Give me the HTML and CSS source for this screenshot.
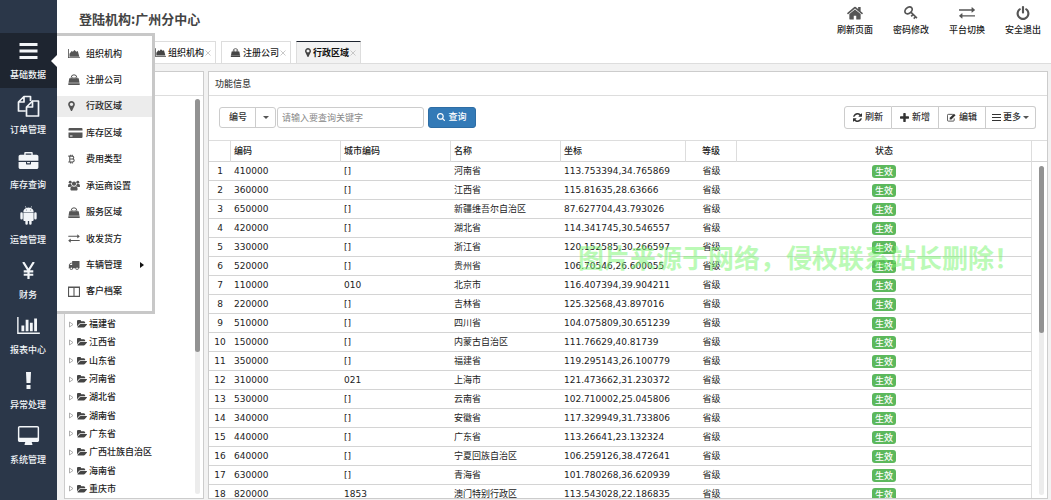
FILE: index.html
```html
<!DOCTYPE html>
<html lang="zh-CN">
<head>
<meta charset="utf-8">
<title>行政区域</title>
<link rel="stylesheet" href="styles.css">
</head>
<body>
<svg class="sprite" aria-hidden="true">
  <symbol id="bars" viewBox="0 0 18 16"><path d="M0 0h18v3H0zM0 6.500h18v3H0zM0 13h18v3H0z"/></symbol>
  <symbol id="lines" viewBox="0 0 18 16"><path d="M0 1h18v2H0zM0 7h18v2H0zM0 13h18v2H0z"/></symbol>
  <symbol id="files" viewBox="0 0 22 22"><path d="M8 16H1V7l5.500-5.500H13V6M6.500 1.500V7H1M15 6h6v15H9V12l6-6v6H9" fill="none" stroke="currentColor" stroke-width="1.700" stroke-linejoin="round"/></symbol>
  <symbol id="case" viewBox="0 0 1792 1536"><path d="M640 256h512v-128h-512v128zm1152 640v480q0 66-47 113t-113 47h-1472q-66 0-113-47t-47-113v-480h672v160q0 26 19 45t45 19h320q26 0 45-19t19-45v-160h672zm-768 0v128h-256v-128h256zm768-480v384h-1792v-384q0-66 47-113t113-47h352v-160q0-40 28-68t68-28h576q40 0 68 28t28 68v160h352q66 0 113 47t47 113z"/></symbol>
  <symbol id="android" viewBox="0 0 18 20"><path d="M3.600 6.300C3.600 4.300 4.800 3 6.400 2.200L5.300.4l.4-.3 1.200 1.900a6 6 0 0 1 4.200 0L12.300.1l.4.3-1.100 1.800c1.600.8 2.800 2.100 2.800 4.100zM6.700 3.700a.5.5 0 1 0 0 1 .5.5 0 0 0 0-1zm4.600 0a.5.5 0 1 0 0 1 .5.5 0 0 0 0-1zM3.600 6.900h10.800v7.600c0 .8-.5 1.300-1.300 1.300h-.8v2.700a1.300 1.300 0 0 1-2.600 0v-2.700H8.300v2.700a1.300 1.300 0 0 1-2.600 0v-2.700h-.8c-.8 0-1.300-.5-1.300-1.300zM.4 8a1.300 1.300 0 0 1 2.600 0v4.800a1.300 1.300 0 0 1-2.600 0zM15 8a1.300 1.300 0 0 1 2.600 0v4.800a1.300 1.300 0 0 1-2.600 0z" fill-rule="evenodd"/></symbol>
  <symbol id="yen" viewBox="0 0 12 16"><path d="M1 0l5 8 5-8M6 7.500V16M1.500 8.800h9M1.500 12h9" fill="none" stroke="currentColor" stroke-width="2.100"/></symbol>
  <symbol id="chart" viewBox="0 128 2048 1536"><path d="M640 896v512h-256v-512h256zm384-512v1024h-256v-1024h256zm1024 1152v128h-2048v-1536h128v1408h1920zm-640-896v768h-256v-768h256zm384-384v1152h-256v-1152h256z"/></symbol>
  <symbol id="exclaim" viewBox="0 0 6 17"><path d="M.5 0h5L5 11H1zM1 13h4v4H1z"/></symbol>
  <symbol id="desktop" viewBox="0 0 1856 1664"><path d="M1728 992v-832q0-13-9.500-22.500t-22.500-9.500h-1536q-13 0-22.500 9.500t-9.500 22.500v832q0 13 9.500 22.500t22.500 9.500h1536q13 0 22.500-9.500t9.500-22.500zm128-832v1088q0 66-47 113t-113 47h-480q0 37 16 77.500t32 71 16 43.500q0 26-19 45t-45 19h-576q-26 0-45-19t-19-45q0-14 16-44t32-70 16-78h-480q-66 0-113-47t-47-113v-1088q0-66 47-113t113-47h1536q66 0 113 47t47 113z"/></symbol>
  <symbol id="home" viewBox="80 224 1632 1312"><path d="M1472 992v480q0 26-19 45t-45 19h-384v-384h-256v384h-384q-26 0-45-19t-19-45v-480q0-1 .5-3t.5-3l575-474 575 474q1 2 1 6zm223-69l-62 74q-8 9-21 11h-3q-13 0-21-7l-692-577-692 577q-12 8-24 7-13-2-21-11l-62-74q-8-10-7-23.500t11-21.500l719-599q32-26 76-26t76 26l244 204v-195q0-14 9-23t23-9h192q14 0 23 9t9 23v408l219 182q10 8 11 21.500t-7 23.500z"/></symbol>
  <symbol id="key" viewBox="0 0 16 16"><g fill="none" stroke="currentColor"><ellipse cx="5.200" cy="5" rx="3.300" ry="4.600" transform="rotate(50 5.200 5)" stroke-width="2"/><path d="M7.800 7l7 6.800M10.200 9.800l-2 2M13 12.500l-1.900 1.900" stroke-width="1.800"/></g></symbol>
  <symbol id="exchange" viewBox="0 256 1792 1408"><path d="M1792 1232v96q0 13-9.500 22.500t-22.500 9.500h-1376v192q0 13-9.500 22.500t-22.500 9.500q-12 0-24-10l-319-270q-9-9-9-22 0-14 9-23l320-270q9-9 23-9 13 0 22.500 9.500t9.500 22.500v192h1376q13 0 22.500 9.500t9.500 22.500zm0-608q0 14-9 23l-320 270q-9 9-23 9-13 0-22.500-9.500t-9.500-22.500v-192h-1376q-13 0-22.500-9.500t-9.500-22.500v-96q0-13 9.500-22.500t22.500-9.500h1376v-192q0-14 9-23t23-9q12 0 24 10l319 270q9 9 9 23z"/></symbol>
  <symbol id="power" viewBox="128 0 1536 1664"><path d="M1664 896q0 156-61 298t-164 245-245 164-298 61-298-61-245-164-164-245-61-298q0-182 80.500-343t226.500-270q43-32 95.500-25t83.500 50q32 42 24.500 94.500t-49.500 84.500q-98 74-151.500 181t-53.500 228q0 104 40.500 198.500t109.500 163.500 163.500 109.500 198.500 40.500 198.500-40.500 163.500-109.500 109.500-163.500 40.500-198.500q0-121-53.500-228t-151.500-181q-42-32-49.500-84.500t24.500-94.500q31-43 84-50t95 25q146 109 226.500 270t80.500 343zm-640-768v640q0 52-38 90t-90 38-90-38-38-90v-640q0-52 38-90t90-38 90 38 38 90z"/></symbol>
  <symbol id="area" viewBox="0 0 13 10"><path d="M0 0h.9v9.100H13v.9H0zM1.600 8.400V5.200L4 2.200l1.300 1L7 1.200l2 1.800 1.600-.6L12.300 8.400z"/></symbol>
  <symbol id="bag" viewBox="0 0 12 11"><path d="M3.200 5V3.600a2.800 2.800 0 0 1 5.600 0V5M4.900 4.500V3M7.100 4.500V3" fill="none" stroke="currentColor"/><path d="M1.300 4.300h9.400l.8 4.500H.5zM.3 9.300h11.400V11H.3z"/></symbol>
  <symbol id="marker" viewBox="384 128 1024 1536"><path d="M1152 640q0-106-75-181t-181-75-181 75-75 181 75 181 181 75 181-75 75-181zm256 0q0 109-33 179l-364 774q-16 33-47.500 52t-67.500 19-67.500-19-46.500-52l-365-774q-33-70-33-179 0-212 150-362t362-150 362 150 150 362z"/></symbol>
  <symbol id="card" viewBox="0 0 14 10"><path d="M1 0h12a1 1 0 0 1 1 1v1.500H0V1a1 1 0 0 1 1-1zM0 4.500h14V9a1 1 0 0 1-1 1H1a1 1 0 0 1-1-1zm1.500 3v1H4v-1z" fill-rule="evenodd"/></symbol>
  <symbol id="coin" viewBox="0 0 8 10"><path d="M.3 1.700H4.600c2.600 0 2.600 3 .2 3.200 3.100 0 3 3.500 0 3.500H.3M2 1.700v6.700M2 4.900h3M3 0v1.700M4.900 0v1.700M3 8.400V10M4.900 8.400V10" fill="none" stroke="currentColor" stroke-width="1.200"/></symbol>
  <symbol id="users" viewBox="0 0 13 11"><circle cx="2.400" cy="2" r="1.600"/><circle cx="10.600" cy="2" r="1.600"/><circle cx="6.500" cy="3.600" r="2.300"/><path d="M0 6.200C0 4.500.7 3.900 1.500 3.900h1.900c.2 1 .6 1.600 1.200 2.200-.8.100-1.500.4-2 1H1C.4 7.100 0 6.900 0 6.200zM13 6.200c0-1.700-.7-2.300-1.500-2.300H9.600c-.2 1-.6 1.600-1.200 2.200.8.100 1.500.4 2 1H12c.6 0 1-.2 1-.9zM2.600 9.600c0-2 .8-3.200 2-3.200.9.700 2.900.7 3.800 0 1.200 0 2 1.200 2 3.200 0 .9-.6 1.400-1.400 1.400H4c-.8 0-1.400-.5-1.400-1.400z"/></symbol>
  <symbol id="truck" viewBox="64 256 1728 1408"><path d="M640 1408q0-52-38-90t-90-38-90 38-38 90 38 90 90 38 90-38 38-90zm-384-512h384v-256h-158q-13 0-22 9l-195 195q-9 9-9 22v30zm1280 512q0-52-38-90t-90-38-90 38-38 90 38 90 90 38 90-38 38-90zm256-1088v1024q0 15-4 26.500t-13.500 18.500-16.500 11.500-23.500 6-22.500 2-25.500 0-22.500-.5q0 106-75 181t-181 75-181-75-75-181h-384q0 106-75 181t-181 75-181-75-75-181h-64q-3 0-22.500.5t-25.500 0-22.500-2-23.500-6-16.500-11.500-13.500-18.500-4-26.500q0-26 19-45t45-19v-320q0-8-.5-35t0-38 2.500-34.500 6.500-37 14-30.500 22.500-30l198-198q19-19 50.500-32t58.500-13h160v-192q0-26 19-45t45-19h1024q26 0 45 19t19 45z"/></symbol>
  <symbol id="columns" viewBox="0 0 11 10"><path d="M.5 1h10v8.500H.5zM5.500 1v8.500M.5 1.200h10" fill="none" stroke="currentColor"/></symbol>
  <symbol id="folder" viewBox="0 256 1880 1280"><path d="M1879 952q0 31-31 66l-336 396q-43 51-120.500 86.500t-143.500 35.500h-1088q-34 0-60.500-13t-26.500-43q0-31 31-66l336-396q43-51 120.500-86.500t143.500-35.500h1088q34 0 60.500 13t26.500 43zm-343-344v160h-832q-94 0-197 47.500t-164 119.500l-337 396-5 6q0-4-.5-12.500t-.5-12.500v-960q0-92 66-158t158-66h320q92 0 158 66t66 158v32h544q92 0 158 66t66 158z"/></symbol>
  <symbol id="search" viewBox="64 128 1664 1664"><path d="M1216 832q0-185-131.500-316.500t-316.500-131.500-316.500 131.500-131.500 316.500 131.500 316.500 316.500 131.500 316.500-131.500 131.500-316.500zm512 832q0 52-38 90t-90 38q-54 0-90-38l-343-342q-179 124-399 124-143 0-273.500-55.500t-225-150-150-225-55.500-273.500 55.500-273.500 150-225 225-150 273.500-55.500 273.500 55.500 225 150 150 225 55.500 273.500q0 220-124 399l343 343q37 37 37 90z"/></symbol>
  <symbol id="refresh" viewBox="128 128 1536 1536"><path d="M1639 1056q0 5-1 7-64 268-268 434.500t-478 166.500q-146 0-282.500-55t-243.500-157l-129 129q-19 19-45 19t-45-19-19-45v-448q0-26 19-45t45-19h448q26 0 45 19t19 45-19 45l-137 137q71 66 161 102t187 36q134 0 250-65t186-179q11-17 53-117 8-23 30-23h192q13 0 22.500 9.500t9.500 22.500zm25-800v448q0 26-19 45t-45 19h-448q-26 0-45-19t-19-45 19-45l138-138q-148-137-349-137-134 0-250 65t-186 179q-11 17-53 117-8 23-30 23h-199q-13 0-22.500-9.500t-9.500-22.500v-7q65-268 270-434.500t480-166.500q146 0 284 55.500t245 156.500l130-129q19-19 45-19t45 19 19 45z"/></symbol>
  <symbol id="plus" viewBox="192 128 1408 1408"><path d="M1600 736v192q0 40-28 68t-68 28h-416v416q0 40-28 68t-68 28h-192q-40 0-68-28t-28-68v-416h-416q-40 0-68-28t-28-68v-192q0-40 28-68t68-28h416v-416q0-40 28-68t68-28h192q40 0 68 28t28 68v416h416q40 0 68 28t28 68z"/></symbol>
  <symbol id="edit" viewBox="0 0 10 9"><path d="M8 5.500V7.500a1 1 0 0 1-1 1H1.500a1 1 0 0 1-1-1V2a1 1 0 0 1 1-1h5" fill="none" stroke="currentColor" stroke-width=".9"/><path d="M3 4.800L7.700.3l1.800 1.700L4.900 6.600H3z"/></symbol>
  <symbol id="caret" viewBox="0 0 6 3"><path d="M0 0h6L3 3z"/></symbol>
  <symbol id="arrow" viewBox="0 0 4 6"><path d="M0 0l4 3-4 3z"/></symbol>
  <symbol id="twist" viewBox="0 0 5 7"><path d="M.5 1l3.500 2.500L.5 6z" fill="none" stroke="currentColor" stroke-width=".8"/></symbol>
  <symbol id="close" viewBox="0 0 6 6"><path d="M.5.5l5 5M5.500.5l-5 5" stroke="currentColor" stroke-width=".8"/></symbol>
</svg>

<nav class="sidebar">
  <a class="nav-item active" href="#"><svg class="nav-icon bars"><use href="#bars"/></svg>基础数据</a>
  <a class="nav-item" href="#"><svg class="nav-icon"><use href="#files"/></svg>订单管理</a>
  <a class="nav-item" href="#"><svg class="nav-icon low"><use href="#case"/></svg>库存查询</a>
  <a class="nav-item" href="#"><svg class="nav-icon mid"><use href="#android"/></svg>运营管理</a>
  <a class="nav-item" href="#"><svg class="nav-icon low"><use href="#yen"/></svg>财务</a>
  <a class="nav-item" href="#"><svg class="nav-icon low"><use href="#chart"/></svg>报表中心</a>
  <a class="nav-item" href="#"><svg class="nav-icon low"><use href="#exclaim"/></svg>异常处理</a>
  <a class="nav-item" href="#"><svg class="nav-icon mid"><use href="#desktop"/></svg>系统管理</a>
</nav>

<nav class="submenu">
  <a href="#"><svg><use href="#area"/></svg>组织机构</a>
  <a href="#"><svg><use href="#bag"/></svg>注册公司</a>
  <a class="current" href="#"><svg class="narrow"><use href="#marker"/></svg>行政区域</a>
  <a href="#"><svg class="wide"><use href="#card"/></svg>库存区域</a>
  <a href="#"><svg class="narrow"><use href="#coin"/></svg>费用类型</a>
  <a href="#"><svg><use href="#users"/></svg>承运商设置</a>
  <a href="#"><svg><use href="#bag"/></svg>服务区域</a>
  <a href="#"><svg class="thin"><use href="#exchange"/></svg>收发货方</a>
  <a href="#"><svg class="thin"><use href="#truck"/></svg>车辆管理<svg class="more"><use href="#arrow"/></svg></a>
  <a href="#"><svg><use href="#columns"/></svg>客户档案</a>
</nav>

<div class="main">
  <header class="header">
    <h1>登陆机构:广州分中心</h1>
    <div class="actions">
      <a href="#"><svg><use href="#home"/></svg>刷新页面</a>
      <a href="#"><svg><use href="#key"/></svg>密码修改</a>
      <a href="#"><svg><use href="#exchange"/></svg>平台切换</a>
      <a href="#"><svg><use href="#power"/></svg>安全退出</a>
    </div>
  </header>
  <div class="tabs">
    <a class="tab" href="#"><svg class="tab-icon"><use href="#area"/></svg>组织机构<svg class="close"><use href="#close"/></svg></a>
    <a class="tab" href="#"><svg class="tab-icon"><use href="#bag"/></svg>注册公司<svg class="close"><use href="#close"/></svg></a>
    <a class="tab selected" href="#"><svg class="tab-icon pin"><use href="#marker"/></svg>行政区域<svg class="close"><use href="#close"/></svg></a>
  </div>
  <div class="content">
    <section class="panel tree-panel">
      <div class="panel-title"></div>
      <ul class="tree">
        <li><svg class="twist"><use href="#twist"/></svg><svg class="folder"><use href="#folder"/></svg>福建省</li>
        <li><svg class="twist"><use href="#twist"/></svg><svg class="folder"><use href="#folder"/></svg>江西省</li>
        <li><svg class="twist"><use href="#twist"/></svg><svg class="folder"><use href="#folder"/></svg>山东省</li>
        <li><svg class="twist"><use href="#twist"/></svg><svg class="folder"><use href="#folder"/></svg>河南省</li>
        <li><svg class="twist"><use href="#twist"/></svg><svg class="folder"><use href="#folder"/></svg>湖北省</li>
        <li><svg class="twist"><use href="#twist"/></svg><svg class="folder"><use href="#folder"/></svg>湖南省</li>
        <li><svg class="twist"><use href="#twist"/></svg><svg class="folder"><use href="#folder"/></svg>广东省</li>
        <li><svg class="twist"><use href="#twist"/></svg><svg class="folder"><use href="#folder"/></svg>广西壮族自治区</li>
        <li><svg class="twist"><use href="#twist"/></svg><svg class="folder"><use href="#folder"/></svg>海南省</li>
        <li><svg class="twist"><use href="#twist"/></svg><svg class="folder"><use href="#folder"/></svg>重庆市</li>
      </ul>
      <div class="scroll tree-scroll"><div class="thumb"></div></div>
    </section>
    <section class="panel grid-panel">
      <div class="panel-title">功能信息</div>
      <div class="toolbar">
        <div class="field">
          <select aria-label="查询字段"><option>编号</option></select>
          <span class="field-caret"><svg class="caret"><use href="#caret"/></svg></span>
        </div>
        <input class="keyword" type="text" aria-label="关键字" placeholder="请输入要查询关键字">
        <button class="query" type="button"><svg><use href="#search"/></svg>查询</button>
        <div class="group">
          <button type="button"><svg><use href="#refresh"/></svg>刷新</button>
          <button type="button"><svg><use href="#plus"/></svg>新增</button>
          <button type="button"><svg><use href="#edit"/></svg>编辑</button>
          <button type="button"><svg><use href="#lines"/></svg>更多<svg class="caret"><use href="#caret"/></svg></button>
        </div>
      </div>
      <div class="grid-wrap">
        <table>
          <colgroup><col class="c-num"><col class="c-mid"><col class="c-mid"><col class="c-mid"><col class="c-pos"><col class="c-level"><col><col class="c-end"></colgroup>
          <thead><tr><th></th><th>编码</th><th>城市编码</th><th>名称</th><th>坐标</th><th class="center">等级</th><th class="center">状态</th><th></th></tr></thead>
          <tbody>
            <tr><td>1</td><td>410000</td><td>[]</td><td>河南省</td><td>113.753394,34.765869</td><td>省级</td><td><span class="badge">生效</span></td><td></td></tr>
            <tr><td>2</td><td>360000</td><td>[]</td><td>江西省</td><td>115.81635,28.63666</td><td>省级</td><td><span class="badge">生效</span></td><td></td></tr>
            <tr><td>3</td><td>650000</td><td>[]</td><td>新疆维吾尔自治区</td><td>87.627704,43.793026</td><td>省级</td><td><span class="badge">生效</span></td><td></td></tr>
            <tr><td>4</td><td>420000</td><td>[]</td><td>湖北省</td><td>114.341745,30.546557</td><td>省级</td><td><span class="badge">生效</span></td><td></td></tr>
            <tr><td>5</td><td>330000</td><td>[]</td><td>浙江省</td><td>120.152585,30.266597</td><td>省级</td><td><span class="badge">生效</span></td><td></td></tr>
            <tr><td>6</td><td>520000</td><td>[]</td><td>贵州省</td><td>106.70546,26.600055</td><td>省级</td><td><span class="badge">生效</span></td><td></td></tr>
            <tr><td>7</td><td>110000</td><td>010</td><td>北京市</td><td>116.407394,39.904211</td><td>省级</td><td><span class="badge">生效</span></td><td></td></tr>
            <tr><td>8</td><td>220000</td><td>[]</td><td>吉林省</td><td>125.32568,43.897016</td><td>省级</td><td><span class="badge">生效</span></td><td></td></tr>
            <tr><td>9</td><td>510000</td><td>[]</td><td>四川省</td><td>104.075809,30.651239</td><td>省级</td><td><span class="badge">生效</span></td><td></td></tr>
            <tr><td>10</td><td>150000</td><td>[]</td><td>内蒙古自治区</td><td>111.76629,40.81739</td><td>省级</td><td><span class="badge">生效</span></td><td></td></tr>
            <tr><td>11</td><td>350000</td><td>[]</td><td>福建省</td><td>119.295143,26.100779</td><td>省级</td><td><span class="badge">生效</span></td><td></td></tr>
            <tr><td>12</td><td>310000</td><td>021</td><td>上海市</td><td>121.473662,31.230372</td><td>省级</td><td><span class="badge">生效</span></td><td></td></tr>
            <tr><td>13</td><td>530000</td><td>[]</td><td>云南省</td><td>102.710002,25.045806</td><td>省级</td><td><span class="badge">生效</span></td><td></td></tr>
            <tr><td>14</td><td>340000</td><td>[]</td><td>安徽省</td><td>117.329949,31.733806</td><td>省级</td><td><span class="badge">生效</span></td><td></td></tr>
            <tr><td>15</td><td>440000</td><td>[]</td><td>广东省</td><td>113.26641,23.132324</td><td>省级</td><td><span class="badge">生效</span></td><td></td></tr>
            <tr><td>16</td><td>640000</td><td>[]</td><td>宁夏回族自治区</td><td>106.259126,38.472641</td><td>省级</td><td><span class="badge">生效</span></td><td></td></tr>
            <tr><td>17</td><td>630000</td><td>[]</td><td>青海省</td><td>101.780268,36.620939</td><td>省级</td><td><span class="badge">生效</span></td><td></td></tr>
            <tr><td>18</td><td>820000</td><td>1853</td><td>澳门特别行政区</td><td>113.543028,22.186835</td><td>省级</td><td><span class="badge">生效</span></td><td></td></tr>
          </tbody>
        </table>
        <div class="scroll grid-scroll"><div class="thumb"></div></div>
      </div>
    </section>
  </div>
</div>
<div class="watermark">图片来源于网络，侵权联系站长删除！</div>
</body>
</html>
```
FILE: styles.css
```css
* { box-sizing: border-box; }

body {
  margin: 0;
  height: 100vh;
  display: flex;
  position: relative;
  overflow: hidden;
  background: #fff;
  color: #222;
  font: 500 9px/14px "Noto Sans CJK SC", sans-serif;
}

a { color: inherit; text-decoration: none; }
svg { fill: currentColor; flex: none; display: block; }
.sprite { position: absolute; width: 0; height: 0; }

/* sidebar */
.sidebar {
  width: 57px;
  flex: none;
  padding-top: 33px;
  background: #2b3749;
  color: #f2f5f8;
}
.nav-item {
  height: 55px;
  display: flex;
  flex-direction: column;
  align-items: center;
  justify-content: flex-end;
  gap: 6px;
  padding: 0 1px 6px 0;
  position: relative;
}
.nav-icon { width: 23px; height: 22px; }
.nav-icon.low { height: 17px; margin-bottom: 3px; }
.nav-icon.mid { height: 19px; margin-bottom: 2px; }
.nav-icon.bars { height: 16px; margin-bottom: 3px; }
.nav-item.active { background: #1e2530; }
.nav-item.active::after {
  content: "";
  position: absolute;
  right: 0;
  top: 22px;
  border: 6px solid transparent;
  border-left-width: 0;
  border-right-color: #fff;
}

/* flyout menu */
.submenu {
  position: absolute;
  left: 57px;
  top: 33px;
  z-index: 2;
  width: 98px;
  height: 281px;
  padding: 7px 0 9px;
  display: flex;
  flex-direction: column;
  justify-content: space-between;
  background: #fff;
  border: solid #c8c8c8;
  border-width: 3px 3px 3px 0;
}
.submenu a {
  height: 21px;
  padding-left: 11px;
  display: flex;
  align-items: center;
}
.submenu a.current { background: #ececec; }
.submenu svg { width: 12px; height: 11px; margin-right: 6px; color: #555; }
.submenu svg.narrow { width: 7px; height: 10px; margin-right: 11px; }
.submenu svg.wide { width: 15px; height: 10px; margin-right: 3px; }
.submenu svg.thin { height: 9px; }
.submenu svg.more { width: 4px; height: 6px; margin: 0 8px 0 auto; color: #111; }

/* header */
.main { flex: 1; min-width: 0; display: flex; flex-direction: column; }
.header { height: 41px; flex: none; display: flex; justify-content: space-between; }
.header h1 { margin: 0; padding: 9px 0 0 22px; font-size: 13px; line-height: 20px; font-weight: 700; color: #444; }
.actions { display: flex; padding-top: 6px; }
.actions a { width: 56px; display: flex; flex-direction: column; align-items: center; gap: 3px; }
.actions svg { width: 16px; height: 14px; color: #555; }

/* tabs */
.tabs {
  height: 23px;
  flex: none;
  display: flex;
  gap: 5px;
  padding-left: 89px;
  border-bottom: 1px solid #ddd;
}
.tab {
  display: flex;
  align-items: center;
  padding: 0 4px 0 8px;
  border: 1px solid #ddd;
  border-bottom: 0;
}
.tab.selected { background: #f2f2f2; border-top: 1px solid #1e2530; font-weight: 700; color: #111; }
.tab-icon { width: 11px; height: 9px; margin-right: 2px; color: #444; }
.tab-icon.pin { width: 6px; }
.close { width: 6px; height: 6px; color: #bbb; margin-left: 1px; }

/* panels */
.content {
  flex: 1;
  min-height: 0;
  display: flex;
  gap: 4px;
  padding: 7px 3px 1px 7px;
  background: #f2f2f2;
}
.panel {
  display: flex;
  flex-direction: column;
  position: relative;
  background: #fff;
  border: 1px solid #ccc;
  overflow: hidden;
}
.panel-title { height: 24px; flex: none; padding: 5px 6px; border-bottom: 1px solid #ddd; color: #444; }
.tree-panel { width: 140px; flex: none; }
.grid-panel { flex: 1; min-width: 0; }

.tree {
  list-style: none;
  margin: auto 0 0;
  padding: 0;
  height: 183px;
  display: grid;
  grid-auto-rows: 1fr;
}
.tree li { display: flex; align-items: center; padding-left: 4px; }
.twist { width: 5px; height: 7px; margin-right: 3px; color: #999; }
.folder { width: 10px; height: 8px; margin-right: 2px; color: #444; }

.scroll { position: absolute; width: 5px; border-radius: 3px; background: #ececec; }
.thumb { border-radius: 3px; background: #929292; }
.tree-scroll { right: 3px; top: 27px; bottom: 4px; }
.tree-scroll .thumb { height: 253px; }
.grid-scroll { right: 3px; top: 25px; bottom: 3px; }
.grid-scroll .thumb { height: 167px; }

/* toolbar */
.toolbar {
  height: 44px;
  flex: none;
  display: flex;
  align-items: center;
  padding: 0 11px 2px 10px;
}
.toolbar select, .toolbar input, .toolbar button {
  margin: 0;
  font: inherit;
  color: #333;
  background: #fff;
  border: 1px solid #ccc;
  border-radius: 3px;
}
.field { position: relative; width: 57px; height: 21px; }
.field select { width: 100%; height: 100%; padding: 0 0 0 9px; appearance: none; }
.field-caret {
  position: absolute;
  inset: 1px 1px 1px auto;
  width: 20px;
  display: grid;
  place-items: center;
  border-left: 1px solid #ccc;
  pointer-events: none;
}
.caret { width: 6px; height: 3px; color: #555; }
.toolbar .keyword { width: 147px; height: 21px; margin: 0 4px 0 1px; padding: 0 4px; }
.keyword::placeholder { color: #888; font-weight: 400; }
.toolbar .query {
  width: 48px;
  height: 21px;
  padding: 0;
  display: flex;
  align-items: center;
  justify-content: center;
  gap: 3px;
  color: #fff;
  background: #337ab7;
  border-color: #2e6da4;
}
.query svg { width: 8px; height: 8px; }
.group { display: flex; height: 23px; margin-left: auto; }
.group button { display: flex; align-items: center; gap: 3px; padding: 0 8px; }
.group button + button { border-left: 0; }
.toolbar .group button:not(:first-child) { border-top-left-radius: 0; border-bottom-left-radius: 0; }
.toolbar .group button:not(:last-child) { border-top-right-radius: 0; border-bottom-right-radius: 0; }
.group svg { width: 9px; height: 9px; }
.toolbar .group button:last-child { padding: 0 6px; gap: 2px; }
.group svg.caret { width: 6px; height: 3px; }

/* data grid */
.grid-wrap { flex: 1; min-height: 0; position: relative; overflow: hidden; border-top: 1px solid #ddd; }
table { width: 100%; table-layout: fixed; border-collapse: separate; border-spacing: 0; }
.c-num { width: 22px; }
.c-mid { width: 110px; }
.c-pos { width: 125px; }
.c-level { width: 51px; }
.c-end { width: 15px; }
th, td { padding: 0 3px; text-align: left; white-space: nowrap; border-bottom: 1px solid #d4d4d4; }
th { height: 21px; font-weight: 500; border-right: 1px solid #ddd; }
th:last-child { border-right: 0; }
td { height: 19px; font: 400 9px/14px "DejaVu Sans", "Noto Sans CJK SC", sans-serif; color: #222; }
th.center, td:first-child, td:nth-child(6), td:nth-child(7) { text-align: center; }
td:nth-child(7) { border-right: 1px solid #ddd; line-height: 0; }
td:last-child { border-bottom: 0; }
.badge {
  display: inline-block;
  padding: 0 3px;
  height: 13px;
  line-height: 13px;
  border-radius: 3px;
  background: #5cb85c;
  color: #fff;
  font-weight: 500;
  font-family: "Noto Sans CJK SC", sans-serif;
  vertical-align: middle;
}

.watermark {
  position: absolute;
  left: 578px;
  top: 242px;
  z-index: 3;
  font-size: 26px;
  line-height: 30px;
  font-weight: 700;
  white-space: nowrap;
  color: rgba(120, 245, 110, 0.5);
  pointer-events: none;
}
```
